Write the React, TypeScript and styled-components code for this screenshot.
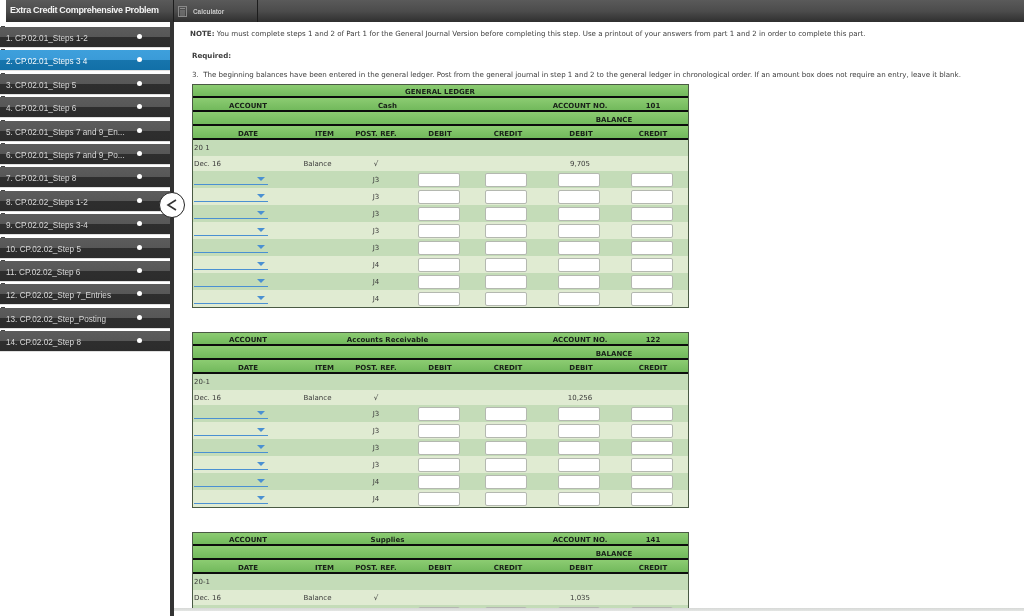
import React from "react";
import styled, { createGlobalStyle } from "styled-components";

const Global = createGlobalStyle`
  html, body { margin: 0; padding: 0; background: #fff; overflow: hidden; }
  * { box-sizing: border-box; }
`;

const Page = styled.div`
  width: 1024px;
  height: 616px;
  display: flex;
  flex-direction: column;
  overflow: hidden;
  position: relative;
`;

const TopBar = styled.header`
  height: 22px;
  margin-left: 6px;
  display: flex;
  flex: none;
  background: linear-gradient(#5a5a5a 0%, #4c4c4c 50%, #2f2f2f 100%);
`;

const Title = styled.div`
  width: 168px;
  flex: none;
  padding: 0 0 2px 4px;
  display: flex;
  align-items: center;
  font: bold 9px "Liberation Sans", Arial, sans-serif;
  letter-spacing: -0.32px;
  color: #f2f2f2;
  white-space: nowrap;
  border-right: 1px solid #1c1c1c;
  filter: blur(0.3px);
`;

const ToolButton = styled.div`
  width: 84px;
  flex: none;
  display: flex;
  align-items: center;
  gap: 6px;
  padding-left: 4px;
  font: bold 6.4px "Liberation Sans", Arial, sans-serif;
  color: #c9c9c9;
  border-right: 1px solid #1c1c1c;
  filter: blur(0.3px);
`;

const Body = styled.div`
  flex: 1;
  min-height: 0;
  display: flex;
`;

const Sidebar = styled.nav`
  width: 174px;
  flex: none;
  padding-top: 5px;
  border-right: 4px solid #333;
  display: flex;
  flex-direction: column;
  gap: 2.4px;
`;

const Item = styled.div<{ $active?: boolean }>`
  position: relative;
  height: 21px;
  flex: none;
  display: flex;
  align-items: center;
  justify-content: space-between;
  padding: 3px 28px 0 6px;
  font: 8.2px "Liberation Sans", Arial, sans-serif;
  color: ${(p) => (p.$active ? "#f4f8fb" : "#d8d8d8")};
  background: ${(p) =>
    p.$active
      ? "linear-gradient(#3ea0dc 0%, #3a9bd8 48%, #1775ad 50%, #1270a8 100%)"
      : "linear-gradient(#5c5c5c 0%, #575757 48%, #2e2e2e 50%, #2c2c2c 100%)"};
  white-space: nowrap;
  border-bottom: 1px solid #e0e0e0;
  &::before {
    content: "";
    position: absolute;
    top: -1px;
    left: 1px;
    width: 4px;
    height: 1px;
    background: #444;
  }
`;

const ItemLabel = styled.span`
  filter: blur(0.3px);
`;

const Dot = styled.span`
  width: 5px;
  height: 5px;
  margin-top: -4px;
  border-radius: 50%;
  background: #fff;
`;

const Collapse = styled.div`
  position: absolute;
  left: 159px;
  top: 192px;
  width: 26px;
  height: 26px;
  border-radius: 50%;
  background: #fff;
  border: 1.5px solid #222;
  display: flex;
  align-items: center;
  justify-content: center;
`;

const Main = styled.main`
  flex: 1;
  min-width: 0;
  display: flex;
  flex-direction: column;
  overflow: hidden;
`;

const Scroll = styled.div`
  flex: 1;
  min-height: 0;
  overflow: hidden;
  padding: 0 0 0 18px;
  font: 7.1px "DejaVu Sans", Verdana, sans-serif;
  color: #3c3c3c;
  filter: blur(0.3px);
`;

const ScrollTrack = styled.div`
  height: 8px;
  flex: none;
  background: linear-gradient(#d6d8d6 0, #e4e6e4 3px, #fff 3px);
`;

const Note = styled.p`
  margin: 8px 0 0 -2px;
  height: 8px;
  line-height: 8px;
  white-space: nowrap;
`;

const Required = styled.p`
  margin: 14px 0 0;
  height: 8px;
  line-height: 8px;
  font-weight: bold;
`;

const Instruction = styled.p`
  margin: 11px 0 0;
  height: 8px;
  line-height: 8px;
  white-space: nowrap;
  letter-spacing: -0.02px;
`;

const Ledger = styled.section`
  width: 497px;
  border: 1px solid #4a5a44;
  margin-top: 24px;
  &:first-of-type { margin-top: 5px; }
`;

const columns = "110px 41px 64px 64px 69px 78px 68px";

const HeadRow = styled.div`
  height: 14px;
  padding-top: 3px;
  display: grid;
  grid-template-columns: ${columns};
  align-items: center;
  background: linear-gradient(#8ccc72, #72b95c);
  border-bottom: 2px solid #0c0c0c;
  font: bold 7px "DejaVu Sans", Verdana, sans-serif;
  color: #182018;
  text-align: center;
  &:first-child { height: 13px; }
`;

const HeadCell = styled.span<{ $nudge?: number }>`
  padding-left: ${(p) => p.$nudge ?? 0}px;
  white-space: nowrap;
`;

const Wide = styled.span<{ $from: number; $to: number }>`
  grid-column: ${(p) => p.$from} / ${(p) => p.$to};
  white-space: nowrap;
`;

const Row = styled.div<{ $tone: "dark" | "light"; $h: number }>`
  height: ${(p) => p.$h}px;
  display: grid;
  grid-template-columns: ${columns};
  align-items: center;
  justify-items: center;
  background: ${(p) => (p.$tone === "dark" ? "#c4dcb8" : "#e0ebd2")};
  font: 7px "DejaVu Sans", Verdana, sans-serif;
  color: #3a3a3a;
`;

const DateText = styled.span`
  justify-self: start;
  padding-left: 1px;
`;

const ItemText = styled.span`
  margin-right: 12px;
`;

const Select = styled.div`
  justify-self: start;
  align-self: start;
  margin: 0 0 0 1px;
  width: 74px;
  height: 14px;
  border-bottom: 1px solid #4a90d2;
  display: flex;
  justify-content: flex-end;
  align-items: flex-start;
  padding: 6px 3px 0 0;
`;

const Caret = styled.i`
  width: 0;
  height: 0;
  border-style: solid;
  border-width: 4px 4.5px 0;
  border-color: #4a90d2 transparent transparent;
`;

const AmountBox = styled.div`
  width: 42px;
  height: 14px;
  margin-right: 2px;
  background: #fff;
  border: 1px solid #b4b8b0;
  border-radius: 2px;
`;

const items = [
  "1. CP.02.01_Steps 1-2",
  "2. CP.02.01_Steps 3 4",
  "3. CP.02.01_Step 5",
  "4. CP.02.01_Step 6",
  "5. CP.02.01_Steps 7 and 9_En...",
  "6. CP.02.01_Steps 7 and 9_Po...",
  "7. CP.02.01_Step 8",
  "8. CP.02.02_Steps 1-2",
  "9. CP.02.02_Steps 3-4",
  "10. CP.02.02_Step 5",
  "11. CP.02.02_Step 6",
  "12. CP.02.02_Step 7_Entries",
  "13. CP.02.02_Step_Posting",
  "14. CP.02.02_Step 8",
];

type LedgerData = {
  general?: boolean;
  name: string;
  no: string;
  date: string;
  balance: string;
  refs: string[];
};

const ledgers: LedgerData[] = [
  { general: true, name: "Cash", no: "101", date: "20 1", balance: "9,705", refs: ["J3", "J3", "J3", "J3", "J3", "J4", "J4", "J4"] },
  { name: "Accounts Receivable", no: "122", date: "20-1", balance: "10,256", refs: ["J3", "J3", "J3", "J3", "J4", "J4"] },
  { name: "Supplies", no: "141", date: "20-1", balance: "1,035", refs: [""] },
];

function CalcIcon() {
  return (
    <svg width="9" height="11" viewBox="0 0 9 11" fill="none" stroke="#8a8a8a" strokeWidth="1">
      <rect x="0.5" y="0.5" width="8" height="10" />
      <path d="M2 2.5h5M2 5h5M2 7h5M2 9h5" />
    </svg>
  );
}

function LedgerTable({ data }: { data: LedgerData }) {
  return (
    <Ledger>
      {data.general && (
        <HeadRow>
          <Wide $from={1} $to={8}>GENERAL LEDGER</Wide>
        </HeadRow>
      )}
      <HeadRow>
        <HeadCell>ACCOUNT</HeadCell>
        <Wide $from={2} $to={5}>{data.name}</Wide>
        <Wide $from={6} $to={7}>ACCOUNT NO.</Wide>
        <Wide $from={7} $to={8}>{data.no}</Wide>
      </HeadRow>
      <HeadRow>
        <Wide $from={6} $to={8}>BALANCE</Wide>
      </HeadRow>
      <HeadRow>
        <HeadCell>DATE</HeadCell>
        <HeadCell $nudge={2}>ITEM</HeadCell>
        <HeadCell>POST. REF.</HeadCell>
        <HeadCell>DEBIT</HeadCell>
        <HeadCell $nudge={3}>CREDIT</HeadCell>
        <HeadCell $nudge={2}>DEBIT</HeadCell>
        <HeadCell>CREDIT</HeadCell>
      </HeadRow>
      <Row $tone="dark" $h={16}>
        <DateText>{data.date}</DateText>
      </Row>
      <Row $tone="light" $h={15}>
        <DateText>Dec. 16</DateText>
        <ItemText>Balance</ItemText>
        <span>√</span>
        <span />
        <span />
        <span>{data.balance}</span>
      </Row>
      {data.refs.map((ref, i) => (
        <Row key={i} $tone={i % 2 === 0 ? "dark" : "light"} $h={17}>
          <Select><Caret /></Select>
          <span />
          <span>{ref}</span>
          <AmountBox />
          <AmountBox />
          <AmountBox />
          <AmountBox />
        </Row>
      ))}
    </Ledger>
  );
}

export default function App() {
  return (
    <Page>
      <Global />
      <TopBar>
        <Title>Extra Credit Comprehensive Problem</Title>
        <ToolButton>
          <CalcIcon />
          Calculator
        </ToolButton>
      </TopBar>
      <Body>
        <Sidebar>
          {items.map((label, i) => (
            <Item key={label} $active={i === 1}>
              <ItemLabel>{label}</ItemLabel>
              <Dot />
            </Item>
          ))}
        </Sidebar>
        <Main>
          <Scroll>
            <Note>
              <b>NOTE:</b> You must complete steps 1 and 2 of Part 1 for the General Journal Version before completing this step. Use a printout of your answers from part 1 and 2 in order to complete this part.
            </Note>
            <Required>Required:</Required>
            <Instruction>
              3.&nbsp; The beginning balances have been entered in the general ledger. Post from the general journal in step 1 and 2 to the general ledger in chronological order. If an amount box does not require an entry, leave it blank.
            </Instruction>
            {ledgers.map((l) => (
              <LedgerTable key={l.no} data={l} />
            ))}
          </Scroll>
          <ScrollTrack />
        </Main>
      </Body>
      <Collapse>
        <svg width="14" height="16" viewBox="0 0 14 16" fill="none" stroke="#333" strokeWidth="1.6">
          <path d="M11 3 3 8l8 5" />
        </svg>
      </Collapse>
    </Page>
  );
}
